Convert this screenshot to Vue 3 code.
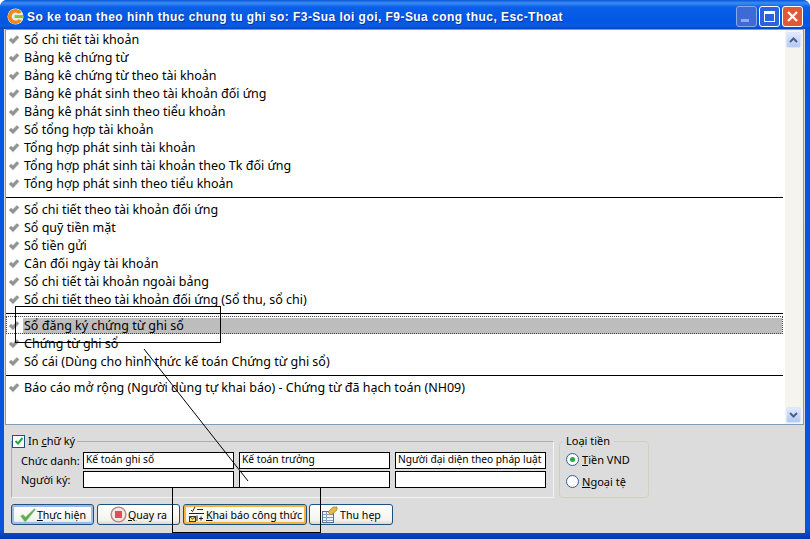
<script setup>
const groups = [
  { sep: 5, rows: ['Sổ chi tiết tài khoản','Bảng kê chứng từ','Bảng kê chứng từ theo tài khoản','Bảng kê phát sinh theo tài khoản đối ứng','Bảng kê phát sinh theo tiểu khoản','Sổ tổng hợp tài khoản','Tổng hợp phát sinh tài khoản','Tổng hợp phát sinh tài khoản theo Tk đối ứng','Tổng hợp phát sinh theo tiểu khoản'] },
  { sep: 5, rows: ['Sổ chi tiết theo tài khoản đối ứng','Sổ quỹ tiền mặt','Sổ tiền gửi','Cân đối ngày tài khoản','Sổ chi tiết tài khoản ngoài bảng','Sổ chi tiết theo tài khoản đối ứng (Sổ thu, sổ chi)'] },
  { sep: 5, rows: ['Sổ đăng ký chứng từ ghi sổ','Chứng từ ghi sổ','Sổ cái (Dùng cho hình thức kế toán Chứng từ ghi sổ)'] },
  { sep: 0, rows: ['Báo cáo mở rộng (Người dùng tự khai báo) - Chứng từ đã hạch toán (NH09)'] },
]
</script>

<template>
  <div class="win">
    <header class="title">
      <svg class="logo" width="17" height="17" viewBox="0 0 18 18">
        <circle cx="9" cy="9" r="8.500" fill="#e9eef0"/>
        <path d="M15.500 4.500A8 8 0 1 0 15.500 13.500L12.500 11.800A4.300 4.300 0 1 1 12.500 6.200Z" fill="#f0871a"/>
        <rect x="8" y="7.500" width="9" height="3.200" fill="#86c440"/>
      </svg>
      <span class="title-text">So ke toan theo hinh thuc chung tu ghi so: F3-Sua loi goi, F9-Sua cong thuc, Esc-Thoat</span>
      <div class="caps">
        <span class="cap min"><i></i></span>
        <span class="cap max"><i></i></span>
        <span class="cap close">
          <svg width="13" height="13" viewBox="0 0 13 13"><path d="M2 2L11 11M11 2L2 11" stroke="#fff" stroke-width="2.400"/></svg>
        </span>
      </div>
    </header>

    <div class="client">
      <div class="listbox">
        <div class="list">
          <template v-for="(g, gi) in groups" :key="gi">
            <div v-for="r in g.rows" :key="r" class="row" :class="{ sel: r === 'Sổ đăng ký chứng từ ghi sổ' }">
              <svg class="tick" width="12" height="12" viewBox="0 0 12 12">
                <path d="M2 6L5 8.800L10 3.400" fill="none" stroke="#d2d5d3" stroke-width="4.200"/>
                <path d="M2 6L5 8.800L10 3.400" fill="none" stroke="#8f9491" stroke-width="2.800"/>
              </svg>
              <span class="label">{{ r }}</span>
            </div>
            <div v-if="g.sep" class="sep"></div>
          </template>
        </div>
        <div class="scroll">
          <span class="sb-btn"><svg width="9" height="6" viewBox="0 0 9 6"><path d="M1 5L4.500 1.500L8 5" fill="none" stroke="#4d6185" stroke-width="2"/></svg></span>
          <span class="sb-btn"><svg width="9" height="6" viewBox="0 0 9 6"><path d="M1 1L4.500 4.500L8 1" fill="none" stroke="#4d6185" stroke-width="2"/></svg></span>
        </div>
      </div>

      <div class="panel">
        <fieldset class="sign">
          <legend><span class="cb"><svg width="10" height="10" viewBox="0 0 10 10"><path d="M1.500 5L4 7.500L8.500 2" fill="none" stroke="#22a83c" stroke-width="2"/></svg></span><span>In <u>c</u>hữ ký</span></legend>
          <div class="grid">
            <span class="lab">Chức danh:</span>
            <span class="inp">Kế toán ghi sổ</span>
            <span class="inp">Kế toán trưởng</span>
            <span class="inp">Người đại diện theo pháp luật</span>
            <span class="lab">Người ký:</span>
            <span class="inp"></span>
            <span class="inp"></span>
            <span class="inp"></span>
          </div>
        </fieldset>
        <fieldset class="cur">
          <legend>Loại tiền</legend>
          <label class="radio"><span class="dot on"></span><span><u>T</u>iền VND</span></label>
          <label class="radio"><span class="dot"></span><span><u>N</u>goại tệ</span></label>
        </fieldset>
      </div>

      <div class="buttons">
        <button class="btn b1 default">
          <svg width="18" height="16" viewBox="0 0 18 16"><path d="M1.500 9L4 7.500L6.500 10L15.500 1.500L16.500 2.500L7 14.500H5.500Z" fill="#5fae52" stroke="#a7d59c" stroke-width=".5"/></svg>
          <span><u>T</u>hực hiện</span>
        </button>
        <button class="btn b2">
          <svg width="17" height="17" viewBox="0 0 18 18"><circle cx="9" cy="9" r="7.800" fill="#f6e8e8" stroke="#b98585" stroke-width="1.500"/><rect x="5.300" y="5.300" width="7.400" height="7.400" fill="#dc4f55"/></svg>
          <span><u>Q</u>uay ra</span>
        </button>
        <button class="btn b3 hot">
          <svg width="18" height="17" viewBox="0 0 18 17"><path d="M1 7.500H16" stroke="#222" fill="none"/><path d="M3 4L4.500 5.500L7 1M9 3.500H15" stroke="#222" fill="none"/><path d="M11 12.500H15M13 10.500V14.500M9 9.500V15" stroke="#222" fill="none"/><rect x="1.500" y="10.500" width="6" height="5" fill="#ffe27a" stroke="#333"/><path d="M1.500 10.500L4.500 13L7.500 10.500" stroke="#333" fill="none"/></svg>
          <span><u>K</u>hai báo công thức</span>
        </button>
        <button class="btn b4">
          <svg width="17" height="17" viewBox="0 0 17 17"><rect x="1.500" y="5.500" width="11" height="11" fill="#eef2f6" stroke="#5a6f8e"/><path d="M2 8.500H12M2 11.500H12M2 14.500H12M5.500 6V16" stroke="#8b9cb5"/><path d="M7 6L12 1H16L16 4L10 9Z" fill="#e8b64c" stroke="#a67c22" stroke-width=".7"/></svg>
          <span>Thu hẹp</span>
        </button>
      </div>
    </div>

    <svg class="marks" width="810" height="539" viewBox="0 0 810 539">
      <g fill="none" stroke="#000" stroke-width="1" shape-rendering="crispEdges">
        <rect x="15.500" y="306.500" width="205" height="36"/>
        <rect x="172.500" y="487.500" width="148" height="45"/>
      </g>
      <path d="M144 349L248 481" fill="none" stroke="#000" stroke-width="1"/>
    </svg>
  </div>
</template>

<style>
html, body { margin: 0; padding: 0; overflow: hidden; background: #fff; }
</style>

<style scoped>
.win {
  position: relative;
  width: 810px;
  height: 539px;
  box-sizing: border-box;
  display: flex;
  flex-direction: column;
  background: linear-gradient(#0058e6 0, #0a55dc 98%, #0038b0 100%);
  padding: 0 5px 6px 4px;
  border-radius: 7px 7px 0 0;
  font-family: "Noto Sans", "Liberation Sans", sans-serif;
  font-size: 12.500px;
  color: #000;
  overflow: hidden;
}
.title {
  height: 29px;
  flex: none;
  display: flex;
  align-items: center;
  box-sizing: border-box;
  margin: 0 -5px 0 -4px;
  padding: 4px 7px 0 7px;
  background: linear-gradient(#0a56d6 0, #3b8cf5 3px, #0a5fe8 7px, #0257e4 22px, #0a5be0 26px, #0048c8 29px);
}
.logo { margin-right: 3px; flex: none; }
.title-text {
  flex: 1;
  color: #fff;
  font-family: "Liberation Sans", sans-serif;
  font-size: 12px;
  font-weight: 700;
  letter-spacing: .45px;
  text-shadow: 1px 1px 0 #0f2f9a;
  white-space: nowrap;
}
.caps { display: flex; gap: 2px; margin-top: -1px; }
.cap {
  width: 21px; height: 21px; box-sizing: border-box;
  border: 1px solid #fff; border-radius: 3px;
  display: flex; align-items: center; justify-content: center; position: relative;
}
.cap.min { background: #3c6bd8; border-color: #8aa8e8; }
.cap.min i { position: absolute; left: 4px; bottom: 4px; width: 8px; height: 3px; background: #8ea8e8; }
.cap.max { background: #2a62e0; }
.cap.max i { width: 11px; height: 11px; box-sizing: border-box; border: 1px solid #fff; border-top-width: 3px; }
.cap.close { background: #dd5a33; }
.client {
  flex: 1;
  display: flex;
  flex-direction: column;
  background: #dcdcdc;
}
.listbox {
  height: 396px;
  flex: none;
  display: flex;
  box-sizing: border-box;
  margin: 0 1px;
  background: #fff;
  border: 1px solid #7f9db9;
}
.list { flex: 1; min-width: 0; }
.row {
  height: 18px;
  display: flex;
  align-items: center;
  padding-left: 2px;
  margin-right: 2px;
}
.row.sel { outline: 1px dotted #444; outline-offset: -1px; }
.row.sel .label { flex: 1; background: #bdbdbd; height: 16px; line-height: 16px; padding-left: 1px; margin-left: -1px; margin-right: 1px; }
.tick { margin-right: 4px; flex: none; }
.label { white-space: nowrap; line-height: 18px; margin-top: 2px; }
.sep { height: 8px; position: relative; }
.sep::after { content: ""; position: absolute; left: 0; right: 2px; top: 5px; height: 1px; background: #000; }
.scroll {
  width: 18px;
  flex: none;
  display: flex;
  flex-direction: column;
  justify-content: space-between;
  background: #f5f5ee;
  padding: 2px 0 0;
  box-sizing: border-box;
}
.sb-btn {
  width: 15px; height: 16px; margin: 0 0 1px 1px;
  display: flex; align-items: center; justify-content: center;
  background: linear-gradient(#e1eafe, #b3c8f5);
  border: 1px solid #dbe6fc;
  border-radius: 2px;
  box-sizing: border-box;
}
.panel { flex: none; height: 79px; display: flex; padding: 0 0 0 7px; gap: 5px; align-items: flex-start; font-size: 11px; }
fieldset { margin: 0; padding: 0; min-width: 0; box-sizing: border-box; }
legend { line-height: 14px; }
.sign {
  width: 543px; height: 64px; margin-top: 9px;
  border: 1px solid #aeaea6;
  border-right-color: #f4f4f4; border-bottom-color: #f4f4f4;
  padding: 0 0 0 8px;
}
.sign legend { padding: 0 2px 0 0; margin-left: -8px; display: flex; align-items: center; gap: 3px; height: 14px; }
.cb {
  width: 13px; height: 13px; box-sizing: border-box;
  border: 1px solid #1c5180; background: #fff;
  display: flex; align-items: center; justify-content: center;
}
.grid { display: grid; grid-template-columns: 58px 151px 151px 151px; column-gap: 5px; row-gap: 2px; margin-top: 4px; }
.grid .lab { line-height: 17px; white-space: nowrap; padding-left: 1px; }
.inp {
  height: 17px; box-sizing: border-box;
  border: 1px solid #000; background: #fff;
  font-size: 10.200px;
  line-height: 12px; padding-left: 2px; white-space: nowrap; overflow: hidden;
}
.cur {
  width: 90px; height: 64px; margin-top: 9px;
  border: 1px solid #d0d0bf; border-radius: 4px;
  padding: 0 0 0 6px;
}
.cur legend { padding: 0 3px; margin-left: -3px; }
.radio { display: flex; align-items: center; gap: 3px; height: 22px; }
.dot {
  width: 13px; height: 13px; border-radius: 50%; box-sizing: border-box;
  border: 1px solid #2f5f8f; background: #fff; position: relative;
}
.dot.on::after { content: ""; position: absolute; left: 3px; top: 3px; width: 5px; height: 5px; border-radius: 50%; background: #2aa83c; }
.buttons { flex: none; display: flex; padding: 0 0 0 7px; }
.btn {
  height: 21px; box-sizing: border-box; padding: 0;
  display: flex; align-items: center; justify-content: center;
  font: inherit; font-size: 10.600px; color: #000; white-space: nowrap;
  background: linear-gradient(#fff, #f3f3ee 80%, #d8d8d0);
  border: 1px solid #1c5180; border-radius: 3px;
}
.b1 { width: 83px; gap: 0; margin-right: 3px; box-shadow: inset 0 0 0 2px #9ebce8; }
.b2 { width: 83px; gap: 1px; margin-right: 3px; }
.b3 { width: 124px; margin-right: 2px; box-shadow: inset 0 0 0 2px #f6b43c; }
.b4 { width: 84px; gap: 2px; }
.marks { position: absolute; left: 0; top: 0; pointer-events: none; }
</style>
